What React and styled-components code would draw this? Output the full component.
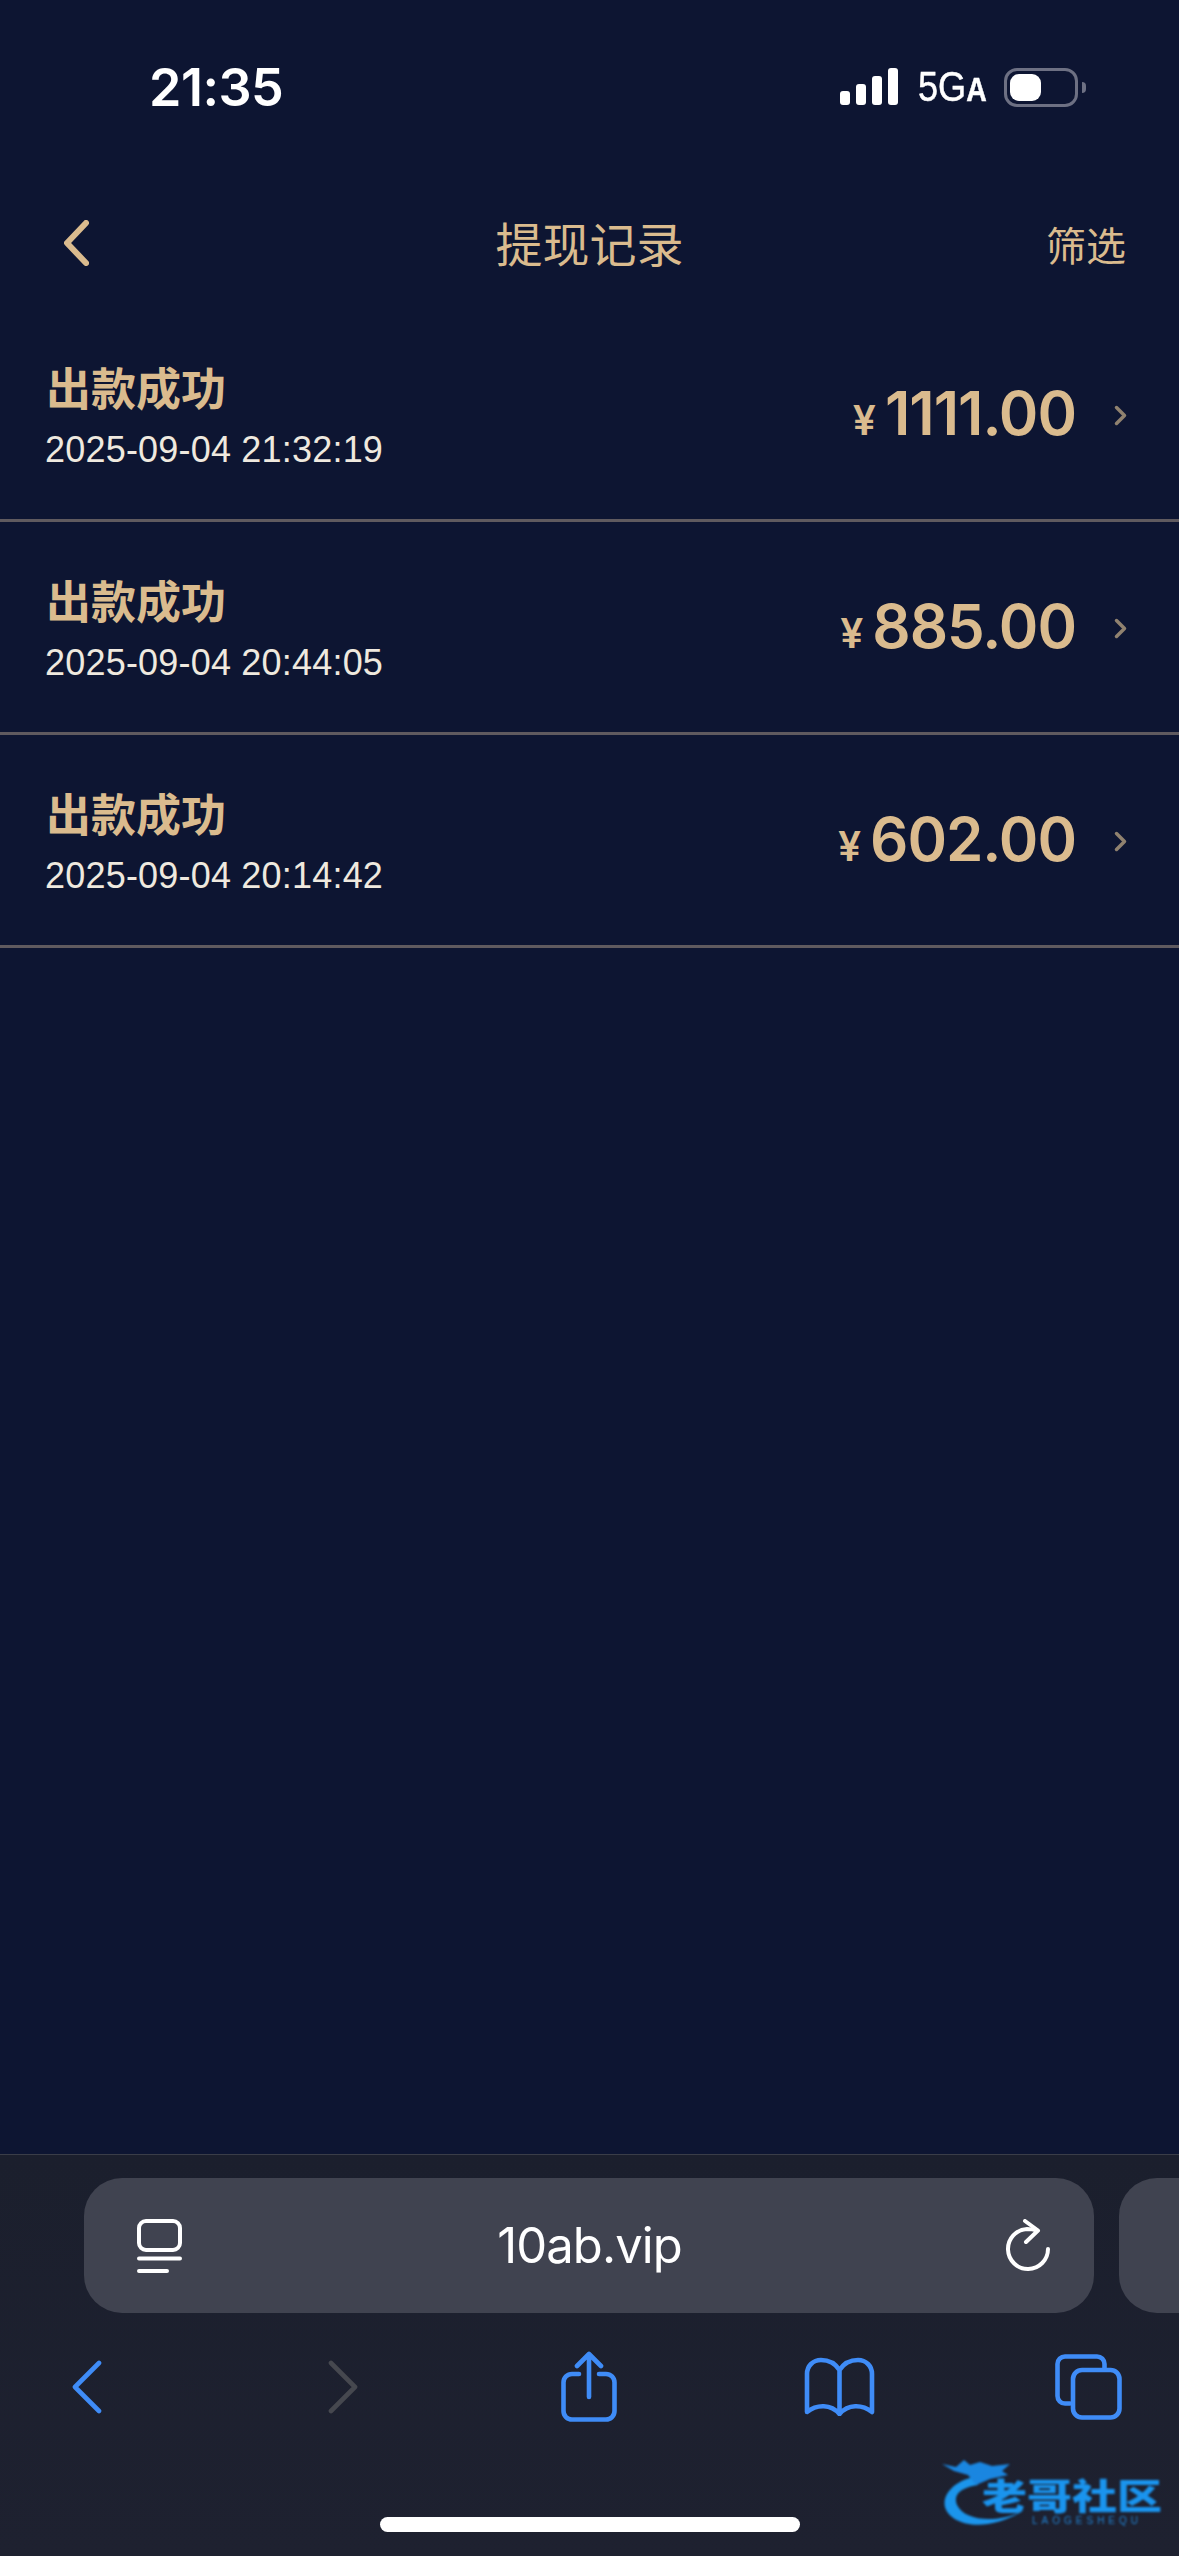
import React from "react"
import styled, { createGlobalStyle } from "styled-components"

const gold = "#dabb8e"
const blue = "#3f8cf7"
const cjk = `"Noto Sans CJK SC", "Liberation Sans", sans-serif`

const GlobalStyle = createGlobalStyle`
  html, body {
    margin: 0;
    padding: 0;
    background: #0d1532;
  }
`

const Page = styled.div`
  position: relative;
  width: 1179px;
  height: 2556px;
  overflow: hidden;
  display: flex;
  flex-direction: column;
  background: #0d1532;
`

const StatusBar = styled.div`
  height: 180px;
  box-sizing: border-box;
  padding: 64px 93px 0 149px;
  display: flex;
  justify-content: space-between;
  align-items: flex-start;
`

const Clock = styled.div`
  font: 600 52px/48px Inter, sans-serif;
  color: #fff;
  letter-spacing: -0.5px;
`

const StatusRight = styled.div`
  display: flex;
  align-items: flex-start;
  padding-top: 4px;
`

const Network = styled.div`
  margin-left: 20px;
  width: 67px;
  height: 38px;
  font: 400 42px/38px "Liberation Sans", sans-serif;
  color: #fff;
  white-space: nowrap;
  transform: scaleX(0.86);
  transform-origin: left center;
  -webkit-text-stroke: 0.5px #fff;
  small {
    font-size: 33px;
    font-weight: 700;
  }
`

const Battery = styled.div`
  position: relative;
  margin-left: 19px;
  margin-right: 8px;
  width: 74px;
  height: 39px;
  box-sizing: border-box;
  padding: 3px;
  border: 3px solid #6d7083;
  border-radius: 13px;
  &::after {
    content: "";
    position: absolute;
    right: -11px;
    top: 11px;
    width: 4px;
    height: 11px;
    border-radius: 0 4px 4px 0;
    background: #6d7083;
  }
`

const BatteryFill = styled.div`
  width: 31px;
  height: 27px;
  border-radius: 9px;
  background: #fff;
`

const NavBar = styled.div`
  height: 129px;
  box-sizing: border-box;
  padding: 0 53px 6px;
  display: grid;
  grid-template-columns: 1fr auto 1fr;
  align-items: center;
  color: ${gold};
  font-family: ${cjk};
`

const BackIcon = styled.svg`
  display: block;
  margin: 2px 0 0 10px;
  filter: blur(0.6px);
`

const NavTitle = styled.div`
  font-size: 47px;
  font-weight: 400;
  line-height: 60px;
`

const NavAction = styled.div`
  justify-self: end;
  font-size: 40px;
  font-weight: 400;
  line-height: 56px;
  margin-top: 4px;
`

const List = styled.div`
  flex: 1;
`

const Row = styled.div`
  height: 213px;
  box-sizing: border-box;
  padding: 0 52px 0 45px;
  display: flex;
  justify-content: space-between;
  align-items: center;
  border-bottom: 3px solid #5f5a5f;
`

const RowInfo = styled.div`
  display: flex;
  flex-direction: column;
  gap: 13px;
`

const RowStatus = styled.div`
  padding-left: 1px;
  font: 600 45px/58px ${cjk};
  color: ${gold};
`

const RowDate = styled.div`
  font: 400 36px/42px "Liberation Sans", sans-serif;
  letter-spacing: 0.2px;
  color: #efe9df;
`

const RowAmount = styled.div`
  display: flex;
  align-items: baseline;
  gap: 9px;
  color: ${gold};
  font-family: Inter, sans-serif;
  font-weight: 600;
`

const Currency = styled.span`
  font-size: 41px;
  line-height: 60px;
`

const Value = styled.span`
  font-size: 60px;
  line-height: 60px;
  letter-spacing: -1px;
`

const RowEnd = styled.div`
  display: flex;
  align-items: center;
  gap: 38px;
  padding-top: 4px;
`

const RowChevron = styled.svg`
  display: block;
  margin-top: -2px;
  filter: blur(0.5px);
`

const Toolbar = styled.div`
  height: 402px;
  box-sizing: border-box;
  padding-top: 23px;
  display: flex;
  flex-direction: column;
  border-top: 1px solid #3a3d48;
  background: linear-gradient(180deg, #1b1f2d 0%, #1e2130 100%);
`

const AddressRow = styled.div`
  display: flex;
  gap: 25px;
  padding-left: 84px;
  overflow: hidden;
`

const AddressBar = styled.div`
  flex: 0 0 1010px;
  height: 135px;
  box-sizing: border-box;
  padding: 0 43px 0 53px;
  display: flex;
  justify-content: space-between;
  align-items: center;
  border-radius: 38px;
  background: #404350;
`

const NextTab = styled.div`
  flex: 0 0 200px;
  height: 135px;
  border-radius: 38px;
  background: #404350;
`

const Url = styled.div`
  margin-right: 8px;
  font: 400 49px/60px Inter, sans-serif;
  color: #fff;
  letter-spacing: -0.9px;
`

const ActionRow = styled.div`
  margin-top: 38px;
  height: 71px;
  padding-left: 72px;
  display: grid;
  grid-template-columns: 256px 233px 243px 251px auto;
  justify-items: start;
  align-items: center;
`

const ActionIcon = styled.svg`
  display: block;
  fill: none;
  stroke: ${(p) => (p.$muted ? "#46484f" : blue)};
  stroke-width: 4.6;
  stroke-linecap: round;
  stroke-linejoin: round;
`

const HomeBar = styled.div`
  width: 420px;
  height: 15px;
  margin: 95px auto 0;
  border-radius: 8px;
  background: #fff;
`

const Watermark = styled.div`
  position: absolute;
  left: 942px;
  top: 2457px;
  width: 224px;
  height: 74px;
  filter: blur(0.8px);
`

const WatermarkDragon = styled.svg`
  position: absolute;
  left: 0;
  top: 0;
`

const WatermarkName = styled.div`
  position: absolute;
  left: 40px;
  top: 24px;
  font: 900 45px/34px ${cjk};
  white-space: nowrap;
  color: #1a94ee;
  transform: scaleY(0.8);
  transform-origin: left top;
`

const WatermarkPinyin = styled.div`
  position: absolute;
  left: 90px;
  top: 59px;
  font: 400 10px/10px "Liberation Sans", sans-serif;
  letter-spacing: 4px;
  color: #2180cf;
`

const records = [
  { date: "2025-09-04 21:32:19", amount: "1111.00" },
  { date: "2025-09-04 20:44:05", amount: "885.00" },
  { date: "2025-09-04 20:14:42", amount: "602.00" },
]

const SignalIcon = () => (
  <svg width="58" height="37" viewBox="0 0 58 37" fill="#fff">
    <rect x="0" y="23" width="10" height="14" rx="3" />
    <rect x="16" y="16" width="10" height="21" rx="3" />
    <rect x="32" y="8" width="10" height="29" rx="3" />
    <rect x="48" y="0" width="10" height="37" rx="3" />
  </svg>
)

const TabsIcon = () => (
  <svg width="45" height="54" viewBox="0 0 45 54" fill="none" stroke="#fff" strokeWidth="4" strokeLinecap="round">
    <rect x="2" y="2" width="41" height="29" rx="7" />
    <path d="M2 39.5H43M2 52H30" />
  </svg>
)

const ReloadIcon = () => (
  <svg width="46" height="54" viewBox="0 0 46 54" fill="none" stroke="#fff" strokeWidth="4" strokeLinecap="round" strokeLinejoin="round">
    <path d="M32 11.5C29 10.5 26 10 22 10A20 20 0 1 0 43 30" />
    <path d="M20 2L33 11.5L21 23" />
  </svg>
)

const App = () => (
  <Page>
    <GlobalStyle />
    <StatusBar>
      <Clock>21:35</Clock>
      <StatusRight>
        <SignalIcon />
        <Network>
          5G<small>A</small>
        </Network>
        <Battery>
          <BatteryFill />
        </Battery>
      </StatusRight>
    </StatusBar>
    <NavBar>
      <BackIcon width="26" height="46" viewBox="0 0 26 46" fill="none" stroke={gold} strokeWidth="6" strokeLinecap="round" strokeLinejoin="round">
        <path d="M23 3L4 23L23 43" />
      </BackIcon>
      <NavTitle>提现记录</NavTitle>
      <NavAction>筛选</NavAction>
    </NavBar>
    <List>
      {records.map((r) => (
        <Row key={r.date}>
          <RowInfo>
            <RowStatus>出款成功</RowStatus>
            <RowDate>{r.date}</RowDate>
          </RowInfo>
          <RowEnd>
            <RowAmount>
              <Currency>¥</Currency>
              <Value>{r.amount}</Value>
            </RowAmount>
            <RowChevron width="13" height="21" viewBox="0 0 13 21" fill="none" stroke="#90826f" strokeWidth="3.5" strokeLinecap="round" strokeLinejoin="round">
              <path d="M2.5 2.5L10.5 10.5L2.5 18.5" />
            </RowChevron>
          </RowEnd>
        </Row>
      ))}
    </List>
    <Toolbar>
      <AddressRow>
        <AddressBar>
          <TabsIcon />
          <Url>10ab.vip</Url>
          <ReloadIcon />
        </AddressBar>
        <NextTab />
      </AddressRow>
      <ActionRow>
        <ActionIcon width="30" height="54" viewBox="0 0 30 54">
          <path d="M27 3L3 27L27 51" />
        </ActionIcon>
        <ActionIcon $muted width="30" height="54" viewBox="0 0 30 54">
          <path d="M3 3L27 27L3 51" />
        </ActionIcon>
        <ActionIcon width="56" height="71" viewBox="0 0 56 71">
          <path d="M28 46V3M16 15L28 3L40 15" />
          <path d="M18 23H11A8.5 8.5 0 0 0 2.5 31.5V60A8.5 8.5 0 0 0 11 68.5H45A8.5 8.5 0 0 0 53.5 60V31.5A8.5 8.5 0 0 0 45 23H38" />
        </ActionIcon>
        <ActionIcon width="71" height="59" viewBox="0 0 71 59">
          <path d="M35.5 13C31 6 24 3 17 3C9 3 3 9 3 17V55C13 47 27 47 35.5 57C44 47 58 47 68 55V17C68 9 62 3 54 3C47 3 40 6 35.5 13V57" />
        </ActionIcon>
        <ActionIcon width="67" height="66" viewBox="0 0 67 66">
          <path d="M15 49.5H10A7.5 7.5 0 0 1 2.5 42V10A7.5 7.5 0 0 1 10 2.5H42A7.5 7.5 0 0 1 49.5 10V14" />
          <rect x="18" y="16" width="46.5" height="47.5" rx="9" />
        </ActionIcon>
      </ActionRow>
      <HomeBar />
    </Toolbar>
    <Watermark>
      <WatermarkDragon width="90" height="74" viewBox="0 0 90 74">
        <path d="M32 20C12 24 0 38 3 50C8 68 44 78 84 52C60 66 24 66 15 48C10 36 22 30 36 28Z" fill="#1b95ec" />
        <path d="M0 7L14 10L22 3L28 8L38 5L50 9L68 7L60 14L66 18L48 22L34 28L26 18L12 14Z" fill="#1a86e0" />
      </WatermarkDragon>
      <WatermarkName>老哥社区</WatermarkName>
      <WatermarkPinyin>LAOGESHEQU</WatermarkPinyin>
    </Watermark>
  </Page>
)

export default App
